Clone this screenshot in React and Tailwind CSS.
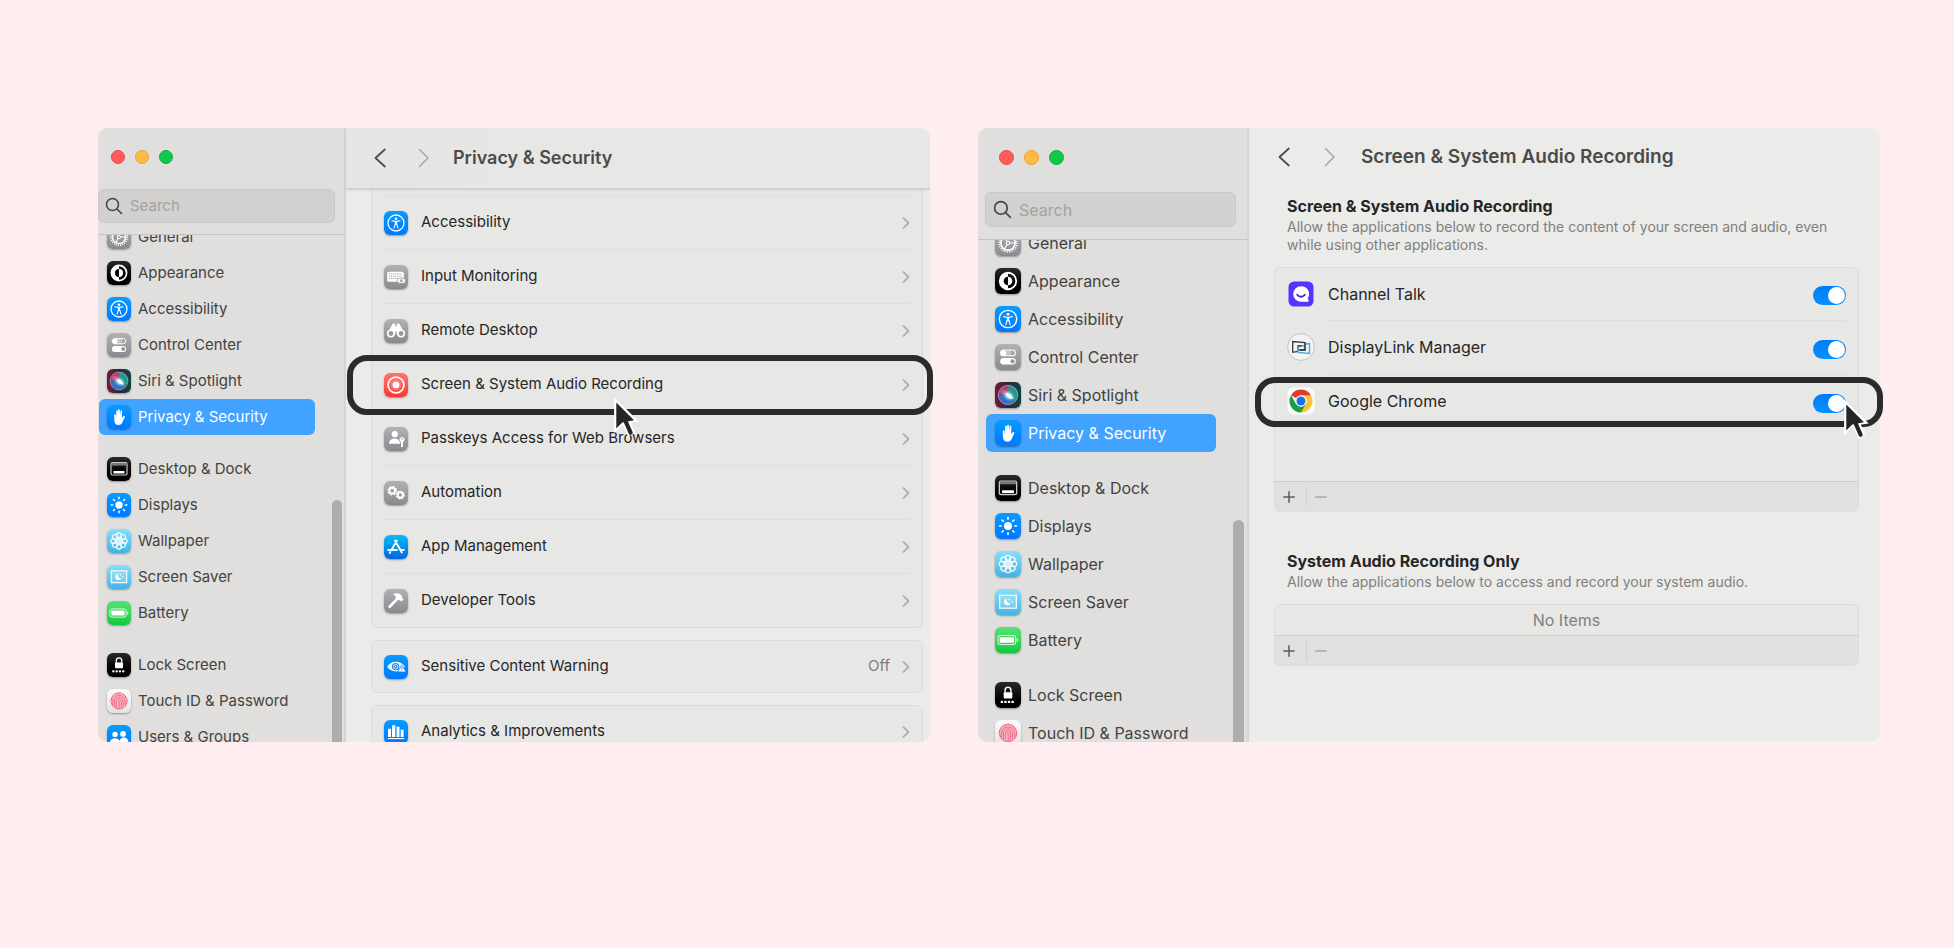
import React from "react";

const TONES = {
  blue: "bg-linear-to-b from-[#0a9bff] to-[#0078ff]",
  gray: "bg-linear-to-b from-[#b2b2b6] to-[#89898e]",
  black: "bg-linear-to-b from-[#2a2a2a] to-[#000000]",
  sky: "bg-linear-to-b from-[#85e0fa] to-[#41b3e4]",
  green: "bg-linear-to-b from-[#55e274] to-[#06c93f]",
  red: "bg-linear-to-b from-[#ff736c] to-[#ff2f2c]",
  white: "bg-linear-to-b from-[#fbfbfb] to-[#e3e3e3]",
  store: "bg-linear-to-b from-[#09bdf8] to-[#0465e0]",
  siri: "bg-linear-to-r from-[#7c0f33] via-[#2a2440] to-[#06443f]",
};

const spokes = (n) => Array.from({ length: n }, (_, i) => (i * 360) / n);

const GLYPHS = {
  general: (
    <g fill="none" stroke="#fff">
      <circle cx="12" cy="12" r="6.6" strokeWidth="1.5" />
      <circle cx="12" cy="12" r="8.3" strokeWidth="1.4" strokeDasharray="1.1 1.07" />
      <circle cx="12" cy="12" r="1.6" strokeWidth="1" />
      <path d="M13.6 12h5M11.2 13.4l-2.6 4.3M11.2 10.6L8.6 6.3" strokeWidth="1.1" />
    </g>
  ),
  appearance: (
    <g>
      <circle cx="12" cy="12" r="7.6" fill="none" stroke="#fff" strokeWidth="1.7" />
      <path d="M12 4.4a7.6 7.6 0 0 0 0 15.2z" fill="#fff" />
      <path d="M12 8a4 4 0 0 1 0 8z" fill="#fff" />
      <path d="M12 8a4 4 0 0 0 0 8z" fill="#000" />
    </g>
  ),
  accessibility: (
    <g>
      <circle cx="12" cy="12" r="8" fill="none" stroke="#fff" strokeWidth="1.3" />
      <circle cx="12" cy="7.700" r="1.300" fill="#fff" />
      <path d="M10.900 10.200h2.200v3.600h-2.200z" fill="#fff" />
      <path d="M7.900 9.800l3.100.6h2l3.100-.6M11.300 13.200l-1.300 4M12.700 13.200l1.300 4" fill="none" stroke="#fff" strokeWidth="1.100" strokeLinecap="round" />
    </g>
  ),
  control: (
    <g>
      <rect x="5.2" y="5.6" width="13.6" height="5.2" rx="2.6" fill="none" stroke="#fff" strokeWidth="1" />
      <circle cx="8" cy="8.2" r="2.5" fill="#fff" />
      <rect x="8" y="6" width="7" height="4.4" fill="#fff" opacity=".35" />
      <rect x="4.8" y="13" width="14.4" height="6" rx="3" fill="#fff" />
      <circle cx="16.2" cy="16" r="1.9" fill="#929297" />
    </g>
  ),
  siri: (
    <g>
      <defs>
        <radialGradient id="orb" cx=".5" cy=".5" r=".5">
          <stop offset="0" stopColor="#fff" />
          <stop offset=".35" stopColor="#c4e8f6" stopOpacity=".9" />
          <stop offset="1" stopColor="#5aa5d8" stopOpacity="0" />
        </radialGradient>
      </defs>
      <circle cx="12" cy="12" r="9" fill="#566089" />
      <path d="M3.500 11C4.500 4.500 11 1.800 15 3.800L12 12z" fill="#c93a6e" opacity=".8" />
      <path d="M12.500 3.200c5.500 0 9 4.300 8.300 9.300-.4 2.600-2 4.500-3.800 5.500l-5-6z" fill="#18a58c" opacity=".85" />
      <path d="M3.300 13l8.700-1 4.500 7c-5 3.500-12 1-13.200-6z" fill="#2f74d8" opacity=".85" />
      <path d="M5 8c2-2 5-1 7 4-4 0-7-1-7-4z" fill="#f0607c" opacity=".7" />
      <circle cx="12" cy="12" r="9" fill="none" stroke="#d3c8dc" strokeWidth=".7" opacity=".7" />
      <ellipse cx="12.500" cy="12.500" rx="7" ry="5" transform="rotate(35 12.500 12.500)" fill="url(#orb)" />
      <path d="M10 10.500c3-.5 5.500 1.500 7 5-3.500.3-6.500-1.500-7-5z" fill="#fff" opacity=".9" />
    </g>
  ),
  hand: (
    <path
      d="M7.200 10.100c0-1 1.500-1 1.600 0l.4 3 .1-7c0-1.100 1.600-1.100 1.600 0l.1 5 .2-6c0-1.100 1.700-1.100 1.700 0l.1 6 .5-5.100c.1-1.100 1.600-1 1.600.1l-.2 7.200 1.100-1.700c.7-1 2.200-.6 1.700.6l-2 4.600c-.9 2.200-2.200 3.200-4.200 3.200-2.900 0-4.100-1.900-4.200-5z"
      fill="#fff"
    />
  ),
  dock: (
    <g fill="none" stroke="#c9c9c9">
      <rect x="4" y="5.700" width="16" height="12.300" rx="1.400" strokeWidth="1.200" />
      <rect x="4.500" y="6" width="15" height="2.600" fill="#777" stroke="none" />
      <rect x="6.500" y="14" width="11" height="2.600" rx=".6" fill="#fff" stroke="none" />
    </g>
  ),
  displays: (
    <g fill="#fff" stroke="#fff">
      <circle cx="12" cy="12" r="3.700" stroke="none" />
      {spokes(8).map((a) => (
        <path key={a} d="M12 4.200v1.500" strokeWidth="1.500" strokeLinecap="round" transform={`rotate(${a} 12 12)`} />
      ))}
    </g>
  ),
  wallpaper: (
    <g fill="none" stroke="#fff">
      {spokes(8).map((a) => (
        <circle key={a} cx="12" cy="6.200" r="2.300" strokeWidth="1.100" transform={`rotate(${a} 12 12)`} />
      ))}
      <circle cx="12" cy="12" r="3.100" fill="#fff" fillOpacity=".7" strokeWidth=".9" />
    </g>
  ),
  saver: (
    <g>
      <rect x="4.300" y="5.800" width="15.400" height="11.900" fill="#fff" fillOpacity=".2" stroke="#fff" strokeWidth="1.100" />
      <path d="M10.800 8.600a3.300 3.300 0 1 0 3.800 4.600 3.400 3.400 0 0 1-3.800-4.600z" fill="#fff" />
      <circle cx="13.300" cy="9.800" r=".8" fill="#fff" />
      <circle cx="16" cy="11.700" r=".8" fill="#fff" />
    </g>
  ),
  battery: (
    <g>
      <rect x="2.800" y="7.900" width="16.400" height="8.200" rx="2.300" fill="none" stroke="#fff" strokeOpacity=".8" strokeWidth="1" />
      <rect x="4.300" y="9.400" width="13.400" height="5.200" rx="1.100" fill="#fff" />
      <path d="M20.300 10.300c1.500.5 1.500 2.900 0 3.400z" fill="#fff" opacity=".9" />
    </g>
  ),
  lock: (
    <g fill="#fff">
      <path d="M9.300 10V7.600a2.700 2.700 0 0 1 5.400 0V10" fill="none" stroke="#fff" strokeWidth="1.300" />
      <rect x="8" y="9.400" width="8" height="5.900" rx="1" />
      {[5.7, 9, 12.3, 15.6].map((x) => (
        <rect key={x} x={x - 0.5} y="17.300" width="2.300" height="2.100" rx=".8" />
      ))}
    </g>
  ),
  touch: (
    <g fill="none" stroke="#ee5f7d" strokeLinecap="round">
      <circle cx="12" cy="12" r="8.500" fill="#fbb6c1" stroke="none" />
      <circle cx="12" cy="12" r="8.100" strokeWidth=".9" strokeDasharray="7 1.200" />
      <path d="M5.800 15.500c-1-6 2.500-9.200 6.200-9.200s7 3 6.200 8.700M7.900 17.300c-1.500-6 1-9 4.100-9s5 3 4.200 8.500M10 18.500c-1.500-5-.5-8.200 2-8.200s2.800 3 2.200 8M12 12.300c.3 2 .3 4 .2 6.700" strokeWidth=".9" />
    </g>
  ),
  users: (
    <g fill="#fff">
      <circle cx="8" cy="9.400" r="2.700" />
      <circle cx="16" cy="8.900" r="2.900" />
      <path d="M3 17.500c0-5.500 8.500-5.500 9.500-1.500 1-5 9-4.500 9 1.500z" />
    </g>
  ),
  keyboard: (
    <g>
      <rect x="3.200" y="6.800" width="16.600" height="10" rx="1.600" fill="#fff" />
      <path d="M5 9h13M5 11.200h13M5 13.400h9" stroke="#a5a5a9" strokeWidth="1" strokeDasharray="1.200 .7" />
      <ellipse cx="17.300" cy="15.800" rx="4.300" ry="2.700" fill="#fff" stroke="#97979b" strokeWidth=".8" />
      <circle cx="17.300" cy="15.800" r="1.500" fill="#97979b" />
      <circle cx="17.300" cy="15.800" r=".6" fill="#fff" />
    </g>
  ),
  binoculars: (
    <g>
      <path d="M8.300 5.500c.2-1.300 2.900-1.300 3 0v1.800h1.400V5.500c.1-1.300 2.800-1.300 3 0l4.800 8.700-7.800 1.300v-3h-1.400v3l-7.800-1.300z" fill="#fff" />
      <circle cx="6.900" cy="14.500" r="3.200" fill="#98989c" stroke="#fff" strokeWidth="1.600" />
      <circle cx="17.100" cy="14.500" r="3.200" fill="#98989c" stroke="#fff" strokeWidth="1.600" />
    </g>
  ),
  record: (
    <g>
      <circle cx="12" cy="12" r="7.900" fill="none" stroke="#fff" strokeWidth="1.700" />
      <circle cx="12" cy="12" r="3.600" fill="#fff" />
      <circle cx="12" cy="12" r="5" fill="none" stroke="#fff" strokeWidth=".5" opacity=".5" />
    </g>
  ),
  passkey: (
    <g fill="#fff">
      <circle cx="10.800" cy="7.200" r="3.100" />
      <path d="M5 16.800c0-6.800 9.800-6.800 11.200-1.500v1.500z" />
      <circle cx="18" cy="12.600" r="2.900" stroke="#97979b" strokeWidth=".7" />
      <path d="M17 14h2v5.200l-1 1-1-1z" />
      <circle cx="18" cy="12" r=".8" fill="#97979b" />
    </g>
  ),
  gears: (
    <g fill="none" stroke="#fff">
      <circle cx="8.200" cy="9.700" r="2.900" strokeWidth="1.900" />
      <circle cx="8.200" cy="9.700" r="4.200" strokeWidth="1.400" strokeDasharray="1.650 1.650" />
      <circle cx="16.300" cy="14" r="2.700" strokeWidth="1.900" />
      <circle cx="16.300" cy="14" r="3.900" strokeWidth="1.400" strokeDasharray="1.530 1.530" />
    </g>
  ),
  store: (
    <g fill="none" stroke="#fff" strokeWidth="1.900" strokeLinecap="round">
      <path d="M12.900 5.500L7.400 15M11 5.500l6.800 12M4.200 15h8.600M16.200 15h3.600M6.300 17l-.5.900" />
    </g>
  ),
  hammer: (
    <g>
      <path d="M5.600 17.800l8-8.400" stroke="#fff" strokeWidth="2.700" strokeLinecap="round" />
      <path d="M8.800 5.200c3.500-1.600 7.200-.8 9 1.500l.3 2 1.500 1.500-2.200 2.300-1.500-1.300-1.400.1-3-3c.4-1.500-1-2.500-2.700-3.100z" fill="#fff" />
    </g>
  ),
  eye: (
    <g>
      <path d="M3.200 11.800c3.800-6.600 13.800-6.600 17.600 0-3.800 6.200-13.800 6.200-17.600 0z" fill="#fff" />
      <circle cx="11.600" cy="11.600" r="3.700" fill="#0a86ff" />
      <circle cx="11.600" cy="11.600" r="2.200" fill="none" stroke="#fff" strokeWidth=".8" />
      <circle cx="11.600" cy="11.600" r=".8" fill="#fff" />
      <path d="M17.800 9.800l4.200 7.200h-8.400z" fill="#fff" stroke="#0a86ff" strokeWidth=".8" />
      <path d="M17.800 12.200v2.200M17.800 15.300v.8" stroke="#0a86ff" strokeWidth=".9" />
    </g>
  ),
  bars: (
    <g fill="#fff">
      <rect x="4" y="8.800" width="3" height="8.200" />
      <rect x="8" y="5.300" width="3.300" height="11.700" />
      <rect x="12.600" y="6.800" width="2.900" height="10.200" />
      <rect x="16.700" y="9.700" width="2.900" height="7.300" />
      <rect x="3.900" y="18" width="16.200" height="1.100" />
    </g>
  ),
};

function Tile({ tone, glyph, size }) {
  return (
    <span className={`block shrink-0 overflow-hidden rounded-md shadow-[0_1px_2px_rgba(0,0,0,0.35)] ${TONES[tone]} ${size}`}>
      <svg viewBox="0 0 24 24" className="size-full" aria-hidden="true">
        {GLYPHS[glyph]}
      </svg>
    </span>
  );
}

const NAV_GROUPS = [
  [
    ["General", "gray", "general"],
    ["Appearance", "black", "appearance"],
    ["Accessibility", "blue", "accessibility"],
    ["Control Center", "gray", "control"],
    ["Siri & Spotlight", "siri", "siri"],
    ["Privacy & Security", "blue", "hand"],
  ],
  [
    ["Desktop & Dock", "black", "dock"],
    ["Displays", "blue", "displays"],
    ["Wallpaper", "sky", "wallpaper"],
    ["Screen Saver", "sky", "saver"],
    ["Battery", "green", "battery"],
  ],
  [
    ["Lock Screen", "black", "lock"],
    ["Touch ID & Password", "white", "touch"],
    ["Users & Groups", "blue", "users"],
  ],
];

const COMPACT = {
  aside: "w-[248px]",
  lights: "h-[61px] pl-[13px] pt-[22px] gap-[10px]",
  light: "size-[14px]",
  search: "mr-[9px] h-[34px] gap-[7px] pl-[6px]",
  magnifier: "size-[18px]",
  text: "text-[15px]",
  divider: "mt-[11px]",
  list: "-mt-4 gap-4 pl-px pr-[29px]",
  row: "h-9 gap-[7px] pl-2",
  tile: "size-6",
  thumb: "top-[372px] right-[2px] w-[10px]",
};

const REGULAR = {
  aside: "w-[271px]",
  lights: "h-[64px] pl-[21px] pt-[22px] gap-[10px]",
  light: "size-[15px]",
  search: "ml-[7px] mr-[11px] h-[35px] gap-[7px] pl-[7px]",
  magnifier: "size-[19px]",
  text: "text-base",
  divider: "mt-3",
  list: "-mt-4 gap-[17px] pl-2 pr-[31px]",
  row: "h-[38px] gap-[7px] pl-[9px]",
  tile: "size-[26px]",
  thumb: "top-[392px] right-[3px] w-[11px]",
};

function Sidebar({ size, id }) {
  return (
    <aside className={`relative flex shrink-0 flex-col overflow-hidden border-r-2 border-[#d6d5d3] bg-[#e0dfdd] ${size.aside}`}>
      <div className={`flex shrink-0 items-start ${size.lights}`}>
        <button aria-label="Close" className={`rounded-full border border-[#e5484a] bg-[#ff5c59] ${size.light}`} />
        <button aria-label="Minimize" className={`rounded-full border border-[#e5a23a] bg-[#ffbb41] ${size.light}`} />
        <button aria-label="Zoom" className={`rounded-full border border-[#0fae3c] bg-[#0ec94b] ${size.light}`} />
      </div>
      <label
        htmlFor={id}
        className={`flex shrink-0 items-center rounded-md border border-[#c9c8c6] bg-[#d2d1cf] ${size.search}`}
      >
        <svg viewBox="0 0 18 18" className={`shrink-0 ${size.magnifier}`} fill="none" stroke="#474745" strokeWidth="1.600" strokeLinecap="round" aria-hidden="true">
          <circle cx="7.500" cy="7.500" r="6" />
          <path d="M12 12l4.500 4.500" />
        </svg>
        <input
          id={id}
          type="text"
          aria-label="Search"
          placeholder="Search"
          className={`min-w-0 flex-1 bg-transparent outline-none placeholder:text-[#a3a2a0] ${size.text}`}
        />
      </label>
      <div className={`min-h-0 flex-1 overflow-hidden border-t border-[#c6c5c3] ${size.divider}`}>
        <nav className={`flex flex-col ${size.list}`}>
          {NAV_GROUPS.map((group) => (
            <ul key={group[0][0]}>
              {group.map(([label, tone, glyph]) => (
                <li key={label}>
                  <a
                    href="#"
                    className={`flex items-center rounded-md ${size.row} ${size.text} ${
                      glyph === "hand" ? "bg-[#41a2ff] text-white" : "text-[#434341]"
                    }`}
                  >
                    <Tile tone={tone} glyph={glyph} size={size.tile} />
                    <span className="whitespace-nowrap">{label}</span>
                  </a>
                </li>
              ))}
            </ul>
          ))}
        </nav>
      </div>
      <div className={`absolute -bottom-2 rounded-full bg-[#adadac] ${size.thumb}`} />
    </aside>
  );
}

function History({ gap }) {
  return (
    <div className={`flex items-center ${gap}`}>
      <button aria-label="Back">
        <svg viewBox="0 0 12 20" className="h-5 w-3" fill="none" stroke="#4d4d4c" strokeWidth="1.800" strokeLinecap="round" strokeLinejoin="round">
          <path d="M10.800 1.500L1.500 10l9.300 8.500" />
        </svg>
      </button>
      <button aria-label="Forward">
        <svg viewBox="0 0 12 20" className="h-5 w-3" fill="none" stroke="#a9a9a8" strokeWidth="1.600" strokeLinecap="round" strokeLinejoin="round">
          <path d="M1.500 1.500L10 10l-8.500 8.500" />
        </svg>
      </button>
    </div>
  );
}

function Cursor({ place }) {
  return (
    <svg viewBox="0 0 28 42" className={`pointer-events-none absolute h-[42px] w-7 ${place}`} aria-hidden="true">
      <path d="M2.300 5.500V31l6.200-6 1.500-.5 5 12 3.500-1.600-4.800-11L20 23z" fill="#fff" stroke="#fff" strokeWidth="4.400" />
      <path d="M2.300 5.500V31.500L8.300 25.500 20 23.300z" fill="#262626" />
      <path d="M11 23l5.600 12.700" stroke="#262626" strokeWidth="4.200" strokeLinecap="round" />
    </svg>
  );
}

function SettingRow({ label, tone, glyph, value, height }) {
  return (
    <button className={`flex w-full items-center text-left text-[15px] text-[#262626] ${height}`}>
      <Tile tone={tone} glyph={glyph} size="size-6" />
      <span className="ml-[13px] flex-1">{label}</span>
      {value && <span className="mr-3 text-[#7e7e7d]">{value}</span>}
      <svg viewBox="0 0 8 12" className="h-3 w-2" fill="none" stroke="#adadac" strokeWidth="1.800" strokeLinecap="round" strokeLinejoin="round" aria-hidden="true">
        <path d="M1.500 1.200L6.500 6l-5 4.800" />
      </svg>
    </button>
  );
}

const PRIVACY_ROWS = [
  ["Accessibility", "blue", "accessibility"],
  ["Input Monitoring", "gray", "keyboard"],
  ["Remote Desktop", "gray", "binoculars"],
  ["Screen & System Audio Recording", "red", "record"],
  ["Passkeys Access for Web Browsers", "gray", "passkey"],
  ["Automation", "gray", "gears"],
  ["App Management", "store", "store"],
  ["Developer Tools", "gray", "hammer"],
];

function PrivacyWindow() {
  return (
    <section className="relative flex min-w-0 flex-[832]">
      <div className="flex min-w-0 flex-1 overflow-hidden rounded-[10px] bg-[#ebebe9]">
        <Sidebar size={COMPACT} id="search-privacy" />
        <div className="flex min-w-0 flex-1 flex-col">
          <header className="z-10 flex h-[61px] shrink-0 items-center gap-[23px] border-b border-[#cfcfcd] bg-linear-to-r from-[#e5e5e6] to-[#e7e7e5] to-40% pb-px pl-7 shadow-[0_1px_2px_rgba(0,0,0,0.12)]">
            <History gap="gap-8" />
            <h1 className="text-lg font-semibold text-[#4b4b4a]">Privacy &amp; Security</h1>
          </header>
          <div className="flex min-h-0 flex-1 flex-col gap-3 overflow-hidden pl-[25px] pr-[7px]">
            <ul className="shrink-0 rounded-b-md border border-t-0 border-[#dcdcda] bg-[#e7e7e5] px-3 pt-[6px]">
              {PRIVACY_ROWS.map(([label, tone, glyph]) => (
                <li key={label} className="border-t border-[#dededc]">
                  <SettingRow label={label} tone={tone} glyph={glyph} height="h-[53px]" />
                </li>
              ))}
            </ul>
            <div className="shrink-0 rounded-md border border-[#dcdcda] bg-[#e7e7e5] px-3">
              <SettingRow label="Sensitive Content Warning" tone="blue" glyph="eye" value="Off" height="h-[51px]" />
            </div>
            <div className="shrink-0 rounded-md border border-[#dcdcda] bg-[#e7e7e5] px-3">
              <SettingRow label="Analytics & Improvements" tone="blue" glyph="bars" height="h-[51px]" />
            </div>
          </div>
        </div>
      </div>
      <div className="pointer-events-none absolute -right-[3px] left-[249px] top-[227px] h-[60px] rounded-[20px] border-6 border-[#2b2b2b]" />
      <Cursor place="left-[516px] top-[269px]" />
    </section>
  );
}

function ChannelTalkIcon() {
  return (
    <svg viewBox="0 0 28 28" className="size-7" aria-hidden="true">
      <rect x="1.500" y="1.500" width="25" height="25" rx="5.500" fill="#5236ff" />
      <path d="M14 6.200a7.800 7.800 0 1 0 0 15.600h6.600c.9 0 1.200-.6.900-1.300l-.7-2.200A7.800 7.800 0 0 0 14 6.200z" fill="#fff" />
      <path d="M10.200 14.800c2 2.600 5.600 2.600 7.600 0" fill="none" stroke="#3c22e0" strokeWidth="1.800" strokeLinecap="round" />
    </svg>
  );
}

function DisplayLinkIcon() {
  return (
    <svg viewBox="0 0 28 28" className="size-7" aria-hidden="true">
      <circle cx="14" cy="14" r="13.400" fill="#f3f3f3" stroke="#b5b5b5" strokeWidth=".8" />
      <path d="M11 18.300l-5.300 1V8.500l12.300 1v7.500h-7v-4.200h3.500" fill="none" stroke="#3a3a3a" strokeWidth="1.300" />
      <path d="M17.500 11.200l5-.6v9.800l-11.500-1v-6.600h6.500v3.500" fill="none" stroke="#4aa6e0" strokeWidth="1.400" />
      <path d="M11 12.800h3.500M18 9.500v7.500h-5" fill="none" stroke="#3a3a3a" strokeWidth="1.300" />
    </svg>
  );
}

function ChromeIcon() {
  return (
    <svg viewBox="0 0 28 28" className="size-7" aria-hidden="true">
      <rect x=".5" y=".5" width="27" height="27" rx="6" fill="#fbfbfb" />
      <path d="M14 14L4.040 8.250A11.500 11.500 0 0 1 23.960 8.250z" fill="#e33b2e" />
      <path d="M14 14V8.250h9.960A11.500 11.500 0 0 1 14 25.500z" fill="#fcc23c" />
      <path d="M4.040 8.250L9.020 16.880 14 19.750l4.980-2.870L14 25.500A11.500 11.500 0 0 1 4.040 8.250z" fill="#1e9e4a" />
      <circle cx="14" cy="14" r="5.750" fill="#fff" />
      <circle cx="14" cy="14" r="4.500" fill="#1a73e8" />
    </svg>
  );
}

const APPS = [
  ["Channel Talk", ChannelTalkIcon],
  ["DisplayLink Manager", DisplayLinkIcon],
  ["Google Chrome", ChromeIcon],
];

function ListFooter() {
  return (
    <div className="flex h-[30px] items-center rounded-b-md border-t border-[#cececc] bg-[#e0e0de] pl-[7px]">
      <button aria-label="Add" className="flex w-6 items-center pl-px">
        <svg viewBox="0 0 12 12" className="size-3" stroke="#5c5c5b" strokeWidth="1.500" strokeLinecap="round">
          <path d="M6 .8v10.400M.8 6h10.400" />
        </svg>
      </button>
      <span className="h-5 w-px bg-[#d0d0ce]" />
      <button aria-label="Remove" className="ml-2 flex items-center">
        <svg viewBox="0 0 12 12" className="size-3" stroke="#a5a5a4" strokeWidth="1.500" strokeLinecap="round">
          <path d="M.8 6h10.400" />
        </svg>
      </button>
    </div>
  );
}

function RecordingWindow() {
  return (
    <section className="relative flex min-w-0 flex-[902]">
      <div className="flex min-w-0 flex-1 overflow-hidden rounded-[10px] bg-[#ebebe9]">
        <Sidebar size={REGULAR} id="search-recording" />
        <div className="min-w-0 flex-1 pl-[25px] pr-[21px]">
          <header className="flex h-[61px] items-center gap-[25px] pb-[3px] pl-1">
            <History gap="gap-[34px]" />
            <h1 className="text-[19px] font-semibold text-[#4b4b4a]">Screen &amp; System Audio Recording</h1>
          </header>
          <div className="px-[13px] pt-[7px]">
            <h2 className="text-base leading-5 font-bold text-[#262626]">Screen &amp; System Audio Recording</h2>
            <p className="mt-[2px] text-sm leading-[18px] text-[#7f7f7e]">
              Allow the applications below to record the content of your screen and audio, even while using other applications.
            </p>
          </div>
          <div className="mt-[13px] rounded-md border border-[#dcdcda] bg-[#e7e7e5]">
            <ul className="h-[213px] px-3">
              {APPS.map(([name, Icon], i) => (
                <li key={name}>
                  <label className="flex items-center text-base text-[#262626]">
                    <Icon />
                    <span
                      className={`ml-[13px] flex flex-1 items-center justify-between pb-px ${
                        i ? "h-[54px] border-t border-[#dededc]" : "h-[52px]"
                      }`}
                    >
                      {name}
                      <input
                        type="checkbox"
                        role="switch"
                        defaultChecked
                        className="mt-1 flex h-[19px] w-[33px] appearance-none items-center justify-end rounded-full bg-linear-to-b from-[#007bf8] to-[#0a91ff] pr-px before:size-[17px] before:rounded-full before:bg-white"
                      />
                    </span>
                  </label>
                </li>
              ))}
            </ul>
            <ListFooter />
          </div>
          <div className="px-[13px] pt-[39px]">
            <h2 className="text-base leading-5 font-bold text-[#262626]">System Audio Recording Only</h2>
            <p className="mt-[2px] text-sm leading-[18px] text-[#7f7f7e]">
              Allow the applications below to access and record your system audio.
            </p>
          </div>
          <div className="mt-[13px] rounded-md border border-[#dcdcda] bg-[#e7e7e5]">
            <p className="flex h-[30px] items-center justify-center text-base text-[#7f7f7e]">No Items</p>
            <ListFooter />
          </div>
        </div>
      </div>
      <div className="pointer-events-none absolute -right-[3px] left-[277px] top-[249px] h-[50px] rounded-[20px] border-6 border-[#2b2b2b]" />
      <Cursor place="right-[8px] top-[271px]" />
    </section>
  );
}

export default function App() {
  return (
    <main className="flex h-screen gap-12 bg-[#ffedf0] pt-32 pr-[74px] pb-[206px] pl-[98px] font-['Inter','Helvetica_Neue',sans-serif]">
      <PrivacyWindow />
      <RecordingWindow />
    </main>
  );
}
